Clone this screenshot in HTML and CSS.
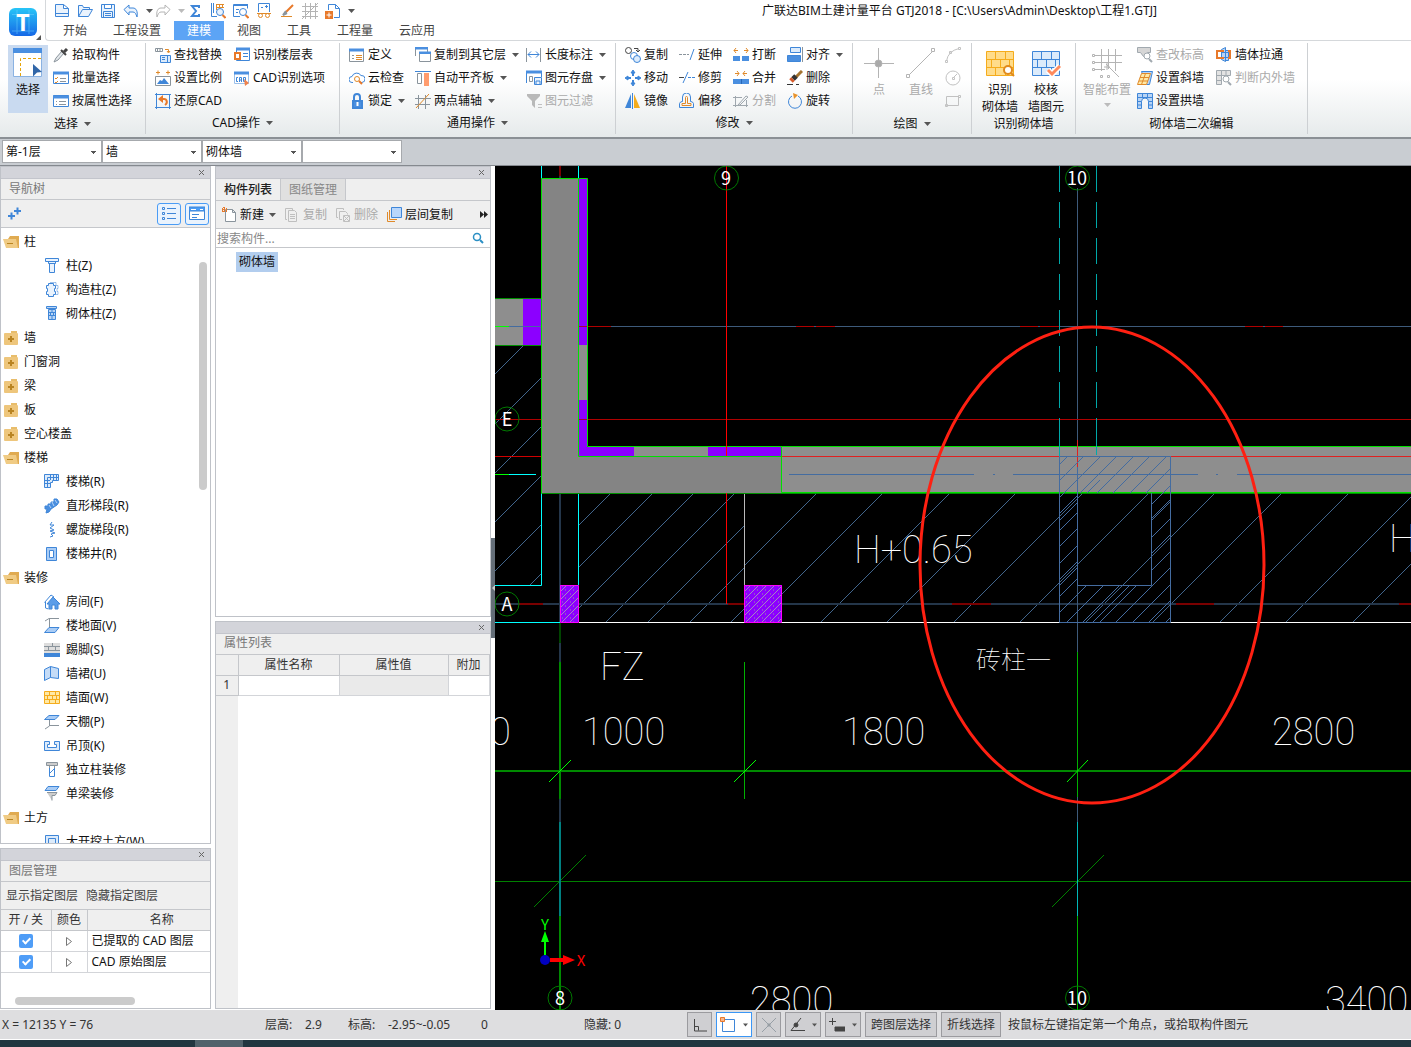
FILE: index.html
```html
<!DOCTYPE html>
<html lang="zh-CN">
<head>
<meta charset="utf-8">
<title>广联达BIM土建计量平台 GTJ2018</title>
<link rel="stylesheet" href="styles.css">
</head>
<body>
<svg class="defs" aria-hidden="true">
  <symbol id="caret" viewBox="0 0 7 4"><path d="M0 0h7L3.5 4z"/></symbol>
  <symbol id="close" viewBox="0 0 7 7"><path class="x" d="M1 1l5 5M6 1L1 6"/></symbol>
  <symbol id="open" viewBox="0 0 16 16"><path fill="#e0ab52" d="M7 2h9v12h-3V5H5z"/><path fill="#f0cb84" d="M0 5h13l2 9H3z"/><path fill="#b98422" d="M4 9h6v1H4z"/></symbol>
  <symbol id="shut" viewBox="0 0 16 16"><path fill="#e8bd6b" d="M8 1h6v2H8z"/><rect x="1" y="3" width="14" height="12" rx="1" fill="#eec67c"/><path fill="#b98422" d="M5 8h6v2H5zM7 6h2v6H7z"/></symbol>
</svg>

<header class="top">
  <div class="logo">
    <svg viewBox="0 0 45 41" class="logo-art"><defs><linearGradient id="lg" x1="0" y1="0" x2="0" y2="1"><stop offset="0" stop-color="#27c5f7"/><stop offset="1" stop-color="#1668e6"/></linearGradient></defs><rect x="9" y="8" width="28" height="28" rx="6" fill="url(#lg)"/><path d="M12 14.500h22M12 31h22M17 10v24M29 10v24" stroke="#6fd0ff" opacity=".5" stroke-width="1"/><text x="23" y="31" text-anchor="middle">T</text><path d="M41 35v5h-5z" fill="#555"/></svg>
  </div>
  <div class="top-main">
    <div class="titlebar">
      <div class="quick">
        <button aria-label="新建"><svg class="ico b" viewBox="0 0 16 16"><path fill="#eaf3fd" d="M1.500 1.500h8l5 4v8h-13zM9.500 1.500v4h5M1.500 10.500h13"/></svg></button>
        <button aria-label="打开"><svg class="ico b" viewBox="0 0 16 16"><path fill="#eaf3fd" d="M1.500 13.500v-11h4l1 2h6v2M1.500 13.500l4-7h10l-4 7z"/></svg></button>
        <button aria-label="保存"><svg class="ico b" viewBox="0 0 16 16"><path fill="#eaf3fd" d="M1.500 1.500h13v13h-13zM4.500 1.500v4h7v-4M3.500 14.500v-6h9v6M5 10.500h6M5 12.500h6"/></svg></button>
        <button aria-label="撤销"><svg class="ico b" viewBox="0 0 16 16"><path fill="#eaf3fd" d="M1 6.500L6 2v3h4c3 0 5 3 4 9-1-3-2-5-4-5H6v3z"/></svg></button>
        <button class="arrow" aria-label="撤销列表"><svg class="caret"><use href="#caret"/></svg></button>
        <button aria-label="恢复"><svg class="ico s" viewBox="0 0 16 16"><path d="M15 6.500L10 2v3H6c-3 0-5 3-4 9 1-3 2-5 4-5h4v3z"/></svg></button>
        <button class="arrow" aria-label="恢复列表"><svg class="caret pale"><use href="#caret"/></svg></button>
        <button aria-label="汇总计算"><svg class="ico b2" viewBox="0 0 16 16"><path d="M12 5V3H5l4 5-4 5h7v-2"/></svg></button>
        <button aria-label="查看工程量"><svg class="ico b" viewBox="0 0 16 16"><path d="M1.500 0v13.500H7M3.500 0v10"/><path class="o" d="M6 1.500h8M6 4.500h8M6.500 1v6M9.500 1v4M12.500 1v4"/><circle cx="10" cy="9" r="3.500" fill="#eaf3fd"/><path class="o2" d="M12.500 12l3 3"/></svg></button>
        <button aria-label="查看报表"><svg class="ico b" viewBox="0 0 16 16"><path d="M.5 1.500h14v4M.5 1.500v12H7M3 6.500h3M3 9.500h2"/><path class="b2" d="M1 2h14"/><circle cx="10" cy="9" r="3.500"/><path class="o2" d="M12.500 12l3 3"/></svg></button>
        <button aria-label="查看三维"><svg class="ico b" viewBox="0 0 16 16"><path d="M2.500 9V.5h11V9M5 4.500h2M9 3.500h3M10.500 2v3"/><path class="o" d="M1 10.500h14"/><circle class="o" cx="4.500" cy="12.500" r="2"/><circle class="o" cx="11.500" cy="12.500" r="2"/></svg></button>
        <button aria-label="画笔"><svg class="ico" viewBox="0 0 16 16"><path class="o2" d="M14 2L6 10"/><path class="g2" d="M7 8l-3 4 4-2"/><path class="o" d="M2 13.500h11"/></svg></button>
        <button aria-label="轴网"><svg class="ico s" viewBox="0 0 16 16"><path d="M3.500 0v16M8.500 0v16M13.500 0v16M0 3.500h16M0 8.500h16M0 13.500h16M0 16L16 0"/></svg></button>
        <button aria-label="导出"><svg class="ico b" viewBox="0 0 16 16"><path d="M3.500 7V1.500h7l4 4v9H9M10.500 1.500v4h4"/><rect x="0" y="8" width="8" height="8" fill="#e8792a" stroke="none"/><path stroke="#fff" d="M1.500 12h5M4 9.500v5"/></svg></button>
        <button class="arrow more" aria-label="自定义"><svg class="caret"><use href="#caret"/></svg></button>
      </div>
      <h1>广联达BIM土建计量平台 GTJ2018 - [C:\Users\Admin\Desktop\工程1.GTJ]</h1>
    </div>
    <nav class="tabs">
      <button>开始</button><button>工程设置</button><button class="on">建模</button><button>视图</button><button>工具</button><button>工程量</button><button>云应用</button>
    </nav>
  </div>
</header>

<section class="ribbon">
  <div class="group g-select">
    <div class="body">
      <button class="big on"><svg class="pic" viewBox="0 0 30 30"><path fill="#fff" stroke="#8ab2e2" d="M.5 1.500h28v27H.5z"/><path fill="#4a8fe0" d="M0 0h29v5H0z"/><path fill="none" stroke="#e5a50a" stroke-dasharray="3 2" d="M7.500 28V10.500H29"/><path fill="#3166a8" d="M20 16l9 8-5 .5-4 4z"/></svg>选择</button>
      <div class="tools">
        <button><svg class="ico" viewBox="0 0 16 16"><path class="g" fill="#e4e8eb" d="M9 4L3 11l-2 4 4-2 6-7z"/><path stroke="#444" stroke-width="2" d="M8 3l5 5"/><path stroke="#444" stroke-width="3" d="M11 5l3-3"/></svg>拾取构件</button>
        <button><svg class="ico b" viewBox="0 0 16 16"><path fill="#fff" d="M.5 2.500h15v11H.5z"/><path class="b3" d="M0 3h16"/><path class="o" d="M2 8l1 1 2-2M2 12l1 1 2-2"/><path class="g" d="M7 8.500h6M7 11.500h6"/></svg>批量选择</button>
        <button><svg class="ico b" viewBox="0 0 16 16"><path fill="#fff" d="M.5 2.500h15v11H.5z"/><path class="b3" d="M0 4h16"/><path class="g" d="M3 8.500h1M6 8.500h7M3 11.500h1M6 11.500h7"/></svg>按属性选择</button>
      </div>
    </div>
    <button class="name">选择<svg class="caret"><use href="#caret"/></svg></button>
  </div>

  <div class="group g-cad">
    <div class="body"><div class="tools">
      <button><svg class="ico" viewBox="0 0 16 16"><path class="g" d="M.5 1.500h7v3h-7zM2.500 1.500v3M5 1.500v3"/><path class="o" d="M10 2.500h3.500V5M12 4l1.500 2L15 4"/><path class="b" fill="#dcebfb" d="M5.500 8.500h10v7h-10zM7 10.500h3M7 12.500h3M12.500 8.500v7"/></svg>查找替换</button>
      <button><svg class="ico" viewBox="0 0 16 16"><path class="o" d="M1 2.500h4M3 .5v4M11 2.500h4M13 .5v4"/><path class="g" d="M.5 6.500h15v9H.5z"/><path fill="#3f86d8" d="M2 14l3-4 2 1 2-3 5 6z"/></svg>设置比例</button>
      <button><svg class="ico b" viewBox="0 0 16 16"><path d="M1.500 0v16M0 14.500h16M14.500 2v14M0 1.500h16"/><path class="o2" d="M10 12c3-2 2-6-1-6H6"/><path fill="#e8792a" stroke="none" d="M3 6l5-4v8z"/></svg>还原CAD</button>
      <button><svg class="ico b" viewBox="0 0 16 16"><path d="M2.500 1.500h13v12h-13zM9 6.500h5M9 9.500h5"/><path class="b3" d="M2 2h14"/><rect class="o2" x="1" y="6" width="5" height="6" fill="#fff"/></svg>识别楼层表</button>
      <button><svg class="ico b" viewBox="0 0 16 16"><path stroke="#9cc0ea" d="M.5 2.500h14v11H.5z"/><path class="b3" d="M0 3h15"/><path d="M4 7.500H2.500v4H4M5.500 12V7.500h2V12M5.500 10h2M9.500 7.500h2v4h-2z"/><path fill="#f0824a" stroke="none" d="M10 9l5 4-4 3z"/></svg>CAD识别选项</button>
    </div></div>
    <button class="name">CAD操作<svg class="caret"><use href="#caret"/></svg></button>
  </div>

  <div class="group g-common">
    <div class="body"><div class="tools">
      <button><svg class="ico b" viewBox="0 0 16 16"><path class="g" d="M.5 2.500h14v12H.5z"/><path class="b3" d="M0 3h15"/><path class="o" d="M7 8.500h6M7 10.500h6M7 12.500h6"/><path class="g" d="M3 8.500h2M3 11.500h2"/></svg>定义</button>
      <button><svg class="ico b" viewBox="0 0 16 16"><path d="M4 12.500H3a3 3 0 010-6 5 5 0 019-1 3.500 3.500 0 011 7h-1"/><circle class="o" cx="8" cy="9" r="2.500"/><path class="o2" d="M10 11l3 3"/></svg>云检查</button>
      <button><svg class="ico b2" viewBox="0 0 16 16"><path d="M5 7V4a3 3 0 016 0v3"/><rect x="4" y="8" width="9" height="7" fill="#4a8fe0"/><path stroke="#fff" d="M8.500 9v4"/></svg>锁定<svg class="caret"><use href="#caret"/></svg></button>
      <button><svg class="ico g" viewBox="0 0 16 16"><path d="M.5 9V.5h12V5"/><path class="b3" d="M0 1h13M4 6h12"/><path fill="#fff" d="M4.500 7v7.500h11V7"/></svg>复制到其它层<svg class="caret"><use href="#caret"/></svg></button>
      <button><svg class="ico g" viewBox="0 0 16 16"><path class="b" d="M0 1.500h16"/><path d="M2.500 3.500h4v10h-4z"/><path fill="#ff9c6e" stroke="none" d="M9 3h5v13H9z"/></svg>自动平齐板<svg class="caret"><use href="#caret"/></svg></button>
      <button><svg class="ico g" viewBox="0 0 16 16"><path d="M3.500 2v14M10.500 2v14M0 5.500h16M0 11.500h15"/><path class="o" d="M1 15L14 1"/></svg>两点辅轴<svg class="caret"><use href="#caret"/></svg></button>
      <button><svg class="ico g" viewBox="0 0 16 16"><path d="M.5 1v14M14.500 1v14"/><path class="b" d="M2 7.500h11M5 4.500l-3 3 3 3M10 4.500l3 3-3 3"/></svg>长度标注<svg class="caret"><use href="#caret"/></svg></button>
      <button><svg class="ico b" viewBox="0 0 16 16"><path d="M.5 13V1.500h15V7"/><path class="b3" d="M0 2h16"/><path class="g" d="M3.500 6.500h3v5h-3z"/><path fill="#eaf3fd" d="M8.500 7.500h7v7h-7zM10 14v-3h4v3"/></svg>图元存盘<svg class="caret"><use href="#caret"/></svg></button>
      <button disabled><svg class="ico" viewBox="0 0 16 16"><path fill="#aaa" d="M1 1h13v2L9 8v7l-3-3V8L1 3z"/><path class="s" d="M12 11.500h4M12 14.500h4"/></svg>图元过滤</button>
    </div></div>
    <button class="name">通用操作<svg class="caret"><use href="#caret"/></svg></button>
  </div>

  <div class="group g-modify">
    <div class="body"><div class="tools">
      <button><svg class="ico" viewBox="0 0 16 16"><circle stroke="#444" cx="3.500" cy="3.500" r="3"/><circle class="b" cx="9" cy="9" r="3.500"/><circle class="b" fill="#dcebfb" cx="12" cy="12" r="3.500"/><path stroke="#444" d="M9 1.500h4V5M11 3l2 2 2-2"/></svg>复制</button>
      <button><svg class="ico b" viewBox="0 0 16 16"><path fill="#3f86d8" d="M8 0l2 3H6zM8 16l2-3H6zM0 8l3-2v4zM16 8l-3-2v4z"/><path class="b2" d="M8 2v4M8 10v4M2 8h4M10 8h4"/></svg>移动</button>
      <button><svg class="ico" viewBox="0 0 16 16"><path fill="#3f86d8" d="M6 1v14H0z"/><path class="b" d="M7.500 0v16"/><path fill="#f5ac1c" d="M9 1l6 14H9z"/></svg>镜像</button>
      <button><svg class="ico b" viewBox="0 0 16 16"><path class="g" stroke-dasharray="3 1" d="M0 7.500h10"/><path d="M15 2l-4 11"/></svg>延伸</button>
      <button><svg class="ico b" viewBox="0 0 16 16"><path stroke="#444" d="M0 7.500h5"/><path d="M9 2L4 13"/><path stroke-dasharray="3 1" d="M9 7.500h7"/></svg>修剪</button>
      <button><svg class="ico b" viewBox="0 0 16 16"><path d="M.5 14.500v-4a3 3 0 013-2V4a4 4 0 018 0v4.500a3 3 0 013 2v4z"/><path class="o" d="M3 12.500v-2h3.500V4.500a1 1 0 012 0v6H12v2z"/></svg>偏移</button>
      <button><svg class="ico" viewBox="0 0 16 16"><path class="o" d="M1 3.500h4M3 1L1 3.500 3 6M11 3.500h4M13 1l2 2.500L13 6"/><path fill="#4a8fe0" d="M0 9h7v5H0zM9 9h7v5H9z"/></svg>打断</button>
      <button><svg class="ico" viewBox="0 0 16 16"><path class="o" d="M2 3.500h4M4 1l2 2.500L4 6M10 3.500h4M12 1l-2 2.500L12 6"/><path fill="#4a8fe0" d="M0 9h16v5H0z"/><path stroke="#2869b8" d="M8.500 9v5"/></svg>合并</button>
      <button disabled><svg class="ico g" viewBox="0 0 16 16"><path d="M0 4.500h9M2.500 3v11M0 12.500h15M13.500 7v7M5 12l8-9 2 1-8 8z"/></svg>分割</button>
      <button><svg class="ico b" viewBox="0 0 16 16"><path fill="#dcebfb" d="M3.500.5h10v5h-10z"/><path fill="#4a8fe0" d="M.5 8.500h13v6H.5z"/><path class="g" d="M15.500 0v15"/></svg>对齐<svg class="caret"><use href="#caret"/></svg></button>
      <button><svg class="ico" viewBox="0 0 16 16"><path stroke="#a4732f" stroke-width="3" d="M15 1L9 7"/><path stroke="#333" stroke-width="5" d="M9 6l-3 3"/><path stroke="#d65a2a" stroke-width="5" d="M6 9l-2 2"/><path stroke="#333" d="M0 14.500h6M9 14.500h3"/></svg>删除</button>
      <button><svg class="ico b" viewBox="0 0 16 16"><path d="M5 3a6.500 6.500 0 106 0"/><path fill="#e8922a" stroke="none" d="M6 0l5 2-4 4z"/></svg>旋转</button>
    </div></div>
    <button class="name">修改<svg class="caret"><use href="#caret"/></svg></button>
  </div>

  <div class="group g-draw">
    <div class="body">
      <button class="big" disabled><svg class="pic s" viewBox="0 0 30 30"><path d="M14.500 0v30M0 15.500h30"/><circle cx="14.500" cy="15.500" r="3.500" fill="#aaa"/></svg>点</button>
      <button class="big" disabled><svg class="pic s" viewBox="0 0 30 30"><path d="M3 27L27 3"/><path fill="#fff" d="M.5 26.500h3v3h-3zM25.500.5h3v3h-3z"/></svg>直线</button>
      <div class="tools">
        <button disabled aria-label="弧"><svg class="ico s" viewBox="0 0 16 16"><path d="M1.500 14Q3 4 14 1.500M.5 13.500h2v2h-2zM13.500.5h2v2h-2zM4.500 4.500h2v2h-2z"/></svg></button>
        <button disabled aria-label="圆"><svg class="ico s" viewBox="0 0 16 16"><circle cx="8" cy="8" r="7"/><path d="M7.500 7.500h2v2h-2zM9 7l3-3"/></svg></button>
        <button disabled aria-label="矩形"><svg class="ico s" viewBox="0 0 16 16"><path d="M1.500 3.500h12v9h-12zM.5 11.500h2v2h-2zM13.500 2.500h2v2h-2z"/></svg></button>
      </div>
    </div>
    <button class="name">绘图<svg class="caret"><use href="#caret"/></svg></button>
  </div>

  <div class="group g-detect">
    <div class="body">
      <button class="big"><svg class="pic" viewBox="0 0 30 30"><path fill="#ffdc8a" stroke="#f5ac1c" d="M1.500 3.500h27v24h-27zM1.500 11.500h27M1.500 19.500h27M10.500 3.500v8M20.500 3.500v8M6.500 11.500v8M15.500 11.500v8M24.500 11.500v8M10.500 19.500v8M20.500 19.500v8"/><circle cx="23" cy="22" r="4" fill="#fff" stroke="#e08a1c" stroke-width="2"/><path stroke="#e08a1c" stroke-width="2" d="M26 25l3 3"/></svg>识别<br>砌体墙</button>
      <button class="big"><svg class="pic" viewBox="0 0 30 30"><path fill="#dcebfb" stroke="#3f86d8" d="M1.500 3.500h27v24h-27zM1.500 11.500h27M1.500 19.500h27M10.500 3.500v8M20.500 3.500v8M6.500 11.500v8M15.500 11.500v8M24.500 11.500v8M10.500 19.500v8M20.500 19.500v8"/><path stroke="#fff" stroke-width="6" fill="none" d="M17 22l4 4 8-8"/><path stroke="#ff8a5c" stroke-width="3" fill="none" d="M17 22l4 4 8-8"/></svg>校核<br>墙图元</button>
    </div>
    <span class="name">识别砌体墙</span>
  </div>

  <div class="group g-edit">
    <div class="body">
      <button class="big" disabled><svg class="pic s" viewBox="0 0 30 30"><path d="M9.500 1v22M16.500 1v20M23.500 1v22M1 7.500h29M1 14.500h29M1 21.500h12M14 16l13 13M12 19h6M15 14v8"/><path fill="#fff" d="M.5 6.500h2v2h-2zM.5 13.500h2v2h-2zM.5 20.500h2v2h-2zM8.500 27.500h2v2h-2zM15.500 27.500h2v2h-2z"/></svg>智能布置<svg class="caret pale"><use href="#caret"/></svg></button>
      <div class="tools">
        <button disabled><svg class="ico g" viewBox="0 0 16 16"><path fill="#ccc" d="M.5.500h13v5h-3l-4 4-3-4h-3z"/><circle cx="10" cy="9" r="3" fill="#fff"/><path class="g2" d="M12 12l3 3"/></svg>查改标高</button>
        <button><svg class="ico" viewBox="0 0 16 16"><path class="b" fill="#b8d4f5" d="M4.500 1.500h11l-3 13h-3z"/><path class="o" fill="#ffe9a6" d="M4.500 3.500h9l-4 11h-9zM3 7.500h9M2 11h9M8.500 3.500l-4 11"/></svg>设置斜墙</button>
        <button><svg class="ico b" viewBox="0 0 16 16"><path fill="#b8d4f5" d="M.5.500h15v15h-4v-7a3 3 0 00-7 0v7h-4zM.5 4.500h15M.5 8.500h4M11.500 8.500h4M.5 12h4M11.500 12h4M5.500.500v4M10.500.500v4"/></svg>设置拱墙</button>
        <button><svg class="ico b" viewBox="0 0 16 16"><path fill="#b8d4f5" d="M5.500 2.500l4-2v14l-4-2zM9.500 3.500h3v10h-3M5.500 5.500h7M5.500 10.500h7"/><path class="o2" d="M8 4H1v7h7M12 4h2v7h-2"/></svg>墙体拉通</button>
        <button disabled><svg class="ico g" viewBox="0 0 16 16"><path fill="#ddd" d="M.5.500h5v14h-5zM5.500.500h9v5h-9zM.5 5.500h5M.5 10.500h5M10 1v4"/><circle cx="10" cy="9" r="3" fill="#fff"/><path class="g2" d="M12 12l3 3"/></svg>判断内外墙</button>
      </div>
    </div>
    <span class="name">砌体墙二次编辑</span>
  </div>
</section>

<section class="filters">
  <select aria-label="楼层"><option>第-1层</option></select>
  <select aria-label="类别"><option>墙</option></select>
  <select aria-label="构件类型"><option>砌体墙</option></select>
  <select aria-label="构件"><option></option></select>
</section>

<main>
  <div class="col left">
    <section class="panel nav">
      <div class="strip"><button aria-label="关闭"><svg><use href="#close"/></svg></button></div>
      <h2>导航树</h2>
      <div class="bar">
        <button class="plus" aria-label="展开"><svg class="ico b2" viewBox="0 0 16 16"><path d="M0 10h7M3.500 6.500v7M6 5h7M9.500 1.500v7"/></svg></button>
        <button class="view" aria-label="列表"><svg class="ico b" viewBox="0 0 16 16"><path d="M1.500 1.500h2v2h-2zM1.500 6.500h2v2h-2zM1.500 11.500h2v2h-2zM6 2.500h9M6 7.500h9M6 12.500h9"/></svg></button>
        <button class="view" aria-label="窗口"><svg class="ico b" viewBox="0 0 16 16"><path fill="#fff" d="M.5 1.500h15v12H.5z"/><path fill="#4a9cf5" d="M0 1h16v4H0z"/><path d="M3 8.500h7M3 11.500h5"/><path stroke="#fff" d="M2 3.500h5M11 3.500h3"/></svg></button>
      </div>
      <div class="tree">
        <ul>
          <li class="f"><svg class="ico"><use href="#open"/></svg>柱</li>
          <li><svg class="ico b" viewBox="0 0 16 16"><path fill="#eaf3fd" d="M1.500.500h13v3h-13zM4.500 3.500h7v2h-7zM5.500 5.500h5v9h-5z"/></svg>柱(Z)</li>
          <li><svg class="ico b" viewBox="0 0 16 16"><path fill="#eaf3fd" d="M4.500 1.500h5v2h2v3h-1v3h1v3h-2v2h-5v-2h-2v-3h1v-3h-1v-3h2z"/><path opacity=".5" d="M6 .5h6v3h2v3h-1v3h1v3h-2"/></svg>构造柱(Z)</li>
          <li><svg class="ico b" viewBox="0 0 16 16"><path fill="#b8d4f5" d="M2.500.500h10v2h-10zM4.500 3.500h7v10h-7zM4.500 6.500h7M4.500 9.500h7M8 3v3M6.500 6v3M9.500 6v3M8 10v3"/></svg>砌体柱(Z)</li>
          <li class="f"><svg class="ico"><use href="#shut"/></svg>墙</li>
          <li class="f"><svg class="ico"><use href="#shut"/></svg>门窗洞</li>
          <li class="f"><svg class="ico"><use href="#shut"/></svg>梁</li>
          <li class="f"><svg class="ico"><use href="#shut"/></svg>板</li>
          <li class="f"><svg class="ico"><use href="#shut"/></svg>空心楼盖</li>
          <li class="f"><svg class="ico"><use href="#open"/></svg>楼梯</li>
          <li><svg class="ico b" viewBox="0 0 16 16"><path fill="#dcebfb" d="M.5.500h14v6h-6v2h-2v5h-6zM3.500 3.500h11M3.500 3.500v10M1 6.500h5M1 9.500h5M6.500 1v5M9.500 1v5M12.500 1v5"/></svg>楼梯(R)</li>
          <li><svg class="ico b" viewBox="0 0 16 16"><path fill="#4a8fe0" d="M1 8h3V6h3V4h3V1h3l2 3-2 3-3 2-3 2-2 3-3 1 1-4H1z"/><path stroke="#b8d4f5" d="M5 7l2 3M8 4l2 4M11 2l2 3"/></svg>直形梯段(R)</li>
          <li><svg class="ico b" viewBox="0 0 16 16"><path d="M8 0l-2 3h4L6 6l4 2-4 1 5 2-4 1 2 2-3 1"/></svg>螺旋梯段(R)</li>
          <li><svg class="ico b" viewBox="0 0 16 16"><path fill="#a9ccf5" d="M2.500 1.500h10v13h-10z"/><path fill="#fff" d="M5.500 4.500h4v7h-4z"/></svg>楼梯井(R)</li>
          <li class="f"><svg class="ico"><use href="#open"/></svg>装修</li>
          <li><svg class="ico b" viewBox="0 0 16 16"><path fill="#5b9de8" d="M9 3l7 7h-2v5h-3v-4H8v4H5v-5H3z"/><path d="M.5 8.500L7 1l3 2M1.500 8v6l3 1"/></svg>房间(F)</li>
          <li><svg class="ico b" viewBox="0 0 16 16"><path class="g" d="M1 3l4-2.500h10M5.500 1v9"/><path fill="#a9ccf5" d="M5 9.500h10l-4 5H.5z"/></svg>楼地面(V)</li>
          <li><svg class="ico g" viewBox="0 0 16 16"><path fill="#ddd" stroke="none" d="M0 1h16v10H0z"/><path d="M0 4.500h16M0 8.500h16M8.500 1v3M4.500 4v4M11.500 4v4"/><path fill="#3f86d8" stroke="none" d="M0 11h16v4H0z"/></svg>踢脚(S)</li>
          <li><svg class="ico b" viewBox="0 0 16 16"><path fill="#c5dcf7" d="M.5 3.500L6.500.500v11l-6 3zM6.500.500l8 2v10l-8-1"/></svg>墙裙(U)</li>
          <li><svg class="ico" viewBox="0 0 16 16"><path fill="#ffe9a6" stroke="#f5ac1c" d="M.5 1.500h15v12H.5zM.5 5.500h15M.5 9.500h15M5.500 1.500v4M11.500 1.500v4M3.500 5.500v4M8.500 5.500v4M12.500 5.500v4M5.500 9.500v4M11.500 9.500v4"/></svg>墙面(W)</li>
          <li><svg class="ico b" viewBox="0 0 16 16"><path fill="#a9ccf5" d="M5 1.500h10l-4 4H.5z"/><path class="g" d="M5.500 6v6L1 15M5 11.500h10"/></svg>天棚(P)</li>
          <li><svg class="ico b" viewBox="0 0 16 16"><path fill="#dcebfb" d="M.5 3.500h5v3h-2v3h9v-3h-2v-3h5v9H.5z"/></svg>吊顶(K)</li>
          <li><svg class="ico g" viewBox="0 0 16 16"><path fill="#ccc" d="M2.500.500h11v3h-11z"/><path class="b" d="M5.500 6v8.500h5V6M6 11l4-4"/><path d="M5.500 4v2M10.500 4v2"/></svg>独立柱装修</li>
          <li><svg class="ico g" viewBox="0 0 16 16"><path class="b" fill="#a9ccf5" d="M4 .5h11l-3 4H1z"/><path fill="#ccc" d="M3 6.500h10l-2 3H8v5"/></svg>单梁装修</li>
          <li class="f"><svg class="ico"><use href="#open"/></svg>土方</li>
          <li><svg class="ico b" viewBox="0 0 16 16"><path fill="#dcebfb" d="M1.500 1.500h13v13h-13zM4.500 4.500h7v7h-7z"/></svg>大开挖土方(W)</li>
        </ul>
        <span class="thumb"></span>
      </div>
    </section>

    <section class="panel layers">
      <div class="strip"><button aria-label="关闭"><svg><use href="#close"/></svg></button></div>
      <h2>图层管理</h2>
      <div class="bar"><button>显示指定图层</button><button>隐藏指定图层</button></div>
      <table>
        <colgroup><col class="w-on"><col class="w-color"><col></colgroup>
        <thead><tr><th>开 / 关</th><th>颜色</th><th class="wide">名称</th></tr></thead>
        <tbody>
          <tr><td class="c"><input type="checkbox" checked aria-label="已提取的 CAD 图层"></td><td class="c"><svg class="tri" viewBox="0 0 6 9"><path d="M.5.500l5 4-5 4z"/></svg></td><td>已提取的 CAD 图层</td></tr>
          <tr><td class="c"><input type="checkbox" checked aria-label="CAD 原始图层"></td><td class="c"><svg class="tri" viewBox="0 0 6 9"><path d="M.5.500l5 4-5 4z"/></svg></td><td>CAD 原始图层</td></tr>
        </tbody>
      </table>
      <span class="hthumb"></span>
    </section>
  </div>

  <div class="col mid">
    <section class="panel parts">
      <div class="strip"><button aria-label="关闭"><svg><use href="#close"/></svg></button></div>
      <div class="ptabs"><button class="on">构件列表</button><button>图纸管理</button></div>
      <div class="bar">
        <button><svg class="ico g" viewBox="0 0 16 16"><path fill="#fff" d="M4.500 2.500h7l3 3v9h-10zM11.500 2.500v3h3"/><path class="o2" stroke-dasharray="1 1" d="M1 2h5M1 4h5M3 0v6"/></svg>新建<svg class="caret"><use href="#caret"/></svg></button>
        <button disabled><svg class="ico s" viewBox="0 0 16 16"><path d="M3 12.500H1.500v-11h7V3"/><path d="M4.500 3.500h6l2 2v9h-8zM6 7.500h5M6 9.500h5M6 11.500h5"/></svg>复制</button>
        <button disabled><svg class="ico s" viewBox="0 0 16 16"><path d="M3 10.500H1.500v-9h7V3"/><path d="M7 12.500H4.500v-8h6l2 2v1M8.500 8.500h6v6h-6zM9 9l5 5M14 9l-5 5"/></svg>删除</button>
        <button class="floors"><svg class="ico" viewBox="0 0 16 16"><path class="o" d="M1.500 5v9.500H9M3.500 3v9.500H11"/><path class="b" fill="#b8d6fb" d="M5.500.500h10v10h-10z"/></svg>层间复制</button>
        <button class="overflow" aria-label="更多"><svg viewBox="0 0 8 7"><path d="M0 0l4 3.500L0 7zM4 0l4 3.500L4 7z"/></svg></button>
      </div>
      <label class="search"><input type="text" placeholder="搜索构件..." aria-label="搜索构件"><svg class="ico" viewBox="0 0 16 16"><circle cx="7" cy="7" r="3.500" stroke="#2b8fc4" stroke-width="1.500"/><path stroke="#2b8fc4" stroke-width="2" d="M10 10l3 3"/></svg></label>
      <div class="items"><span>砌体墙</span></div>
    </section>

    <section class="panel props">
      <div class="strip"><button aria-label="关闭"><svg><use href="#close"/></svg></button></div>
      <h2>属性列表</h2>
      <table>
        <colgroup><col class="w-no"><col class="w-name"><col class="w-val"><col class="w-add"></colgroup>
        <thead><tr><th></th><th>属性名称</th><th>属性值</th><th>附加</th></tr></thead>
        <tbody><tr><th>1</th><td></td><td class="dim"></td><td></td></tr></tbody>
      </table>
      <div class="rest"></div>
    </section>
  </div>

  <div class="split"><button aria-label="收起"><svg viewBox="0 0 4 6"><path d="M4 0v6L1 3z"/></svg></button></div>

  <div class="canvas">
    <svg viewBox="495 166 916 844" preserveAspectRatio="xMinYMin slice">
      <defs>
        <clipPath id="c1"><path d="M495 346h46v239h-46z"/></clipPath>
        <clipPath id="c2"><path d="M579 494h165v128H579z"/></clipPath>
        <clipPath id="c3"><path d="M744 494h667v128H744z"/></clipPath>
        <clipPath id="c4"><path clip-rule="evenodd" d="M1060 457h110v165h-110zM1078 493v92h73v-92z"/></clipPath>
        <pattern id="p" width="8" height="8" patternUnits="userSpaceOnUse"><path d="M0 8L8 0" stroke="#a58abf"/><path d="M2 2h1M5 6h1" stroke="#999"/></pattern>
      </defs>
      <g class="hatch">
        <path clip-path="url(#c1)" d="M495 374l46-46M495 424l46-46M495 473l46-46M495 522l46-46M495 571l46-46M495 620l46-46"/>
        <path clip-path="url(#c2)" d="M482 622l129-129M524 622l129-129M565 622l129-129M606 622l129-129M648 622l129-129M690 622l129-129M731 622l129-129"/>
        <path clip-path="url(#c3)" d="M688 622l129-129M754 622l129-129M821 622l129-129M887 622l129-129M954 622l129-129M1020 622l129-129M1086 622l129-129M1153 622l129-129M1220 622l129-129M1286 622l129-129M1353 622l129-129"/>
      </g>
      <path class="w2 navy" d="M560 166v496M560 799v24M495 604h916"/>
      <path class="w2" stroke="#7a0000" d="M560 166v10M519 604h24M728 604h39M952 604h39M1176 604h38M1399 604h12"/>
      <path stroke="#3d5a7a" d="M587 326.500h824M1077.500 188v634"/>
      <path stroke="#b00000" d="M495 419.500h46M587 419.500h824M587 326.500h24M796 326.500h18M816 326.500h19M1020 326.500h18M1040 326.500h19M1245 326.500h18M1265 326.500h18"/>
      <path stroke="#d00000" d="M495 456.500h46"/>
      <path stroke="#0ff" d="M541.500 166v13M578.500 166v13M541.500 493v92.500H495M578.500 493v92M495 622.500h65M509 474.500h27"/>
      <path stroke="#0f0" d="M495 474.500h14"/>
      <path stroke="#fff" d="M579 622.500h832"/><path stroke="#bbb" d="M744.500 493v92"/>
      <path stroke="#00a8a8" stroke-dasharray="26 10" d="M1059.500 166v290M1096.500 166v290"/>

      <path fill="#8e8e8e" d="M495 299h28v46h-28zM579 345h8v55h-8zM634 447h74v9h-74zM781 447h630v46H781z"/>
      <path fill="#8c00ff" d="M523 299h18v46h-18zM579 179h8v166h-8zM579 400h8v47h47v9h-55zM708 447h73v9h-73z"/>
      <path fill="#848484" d="M541 178h38v278h202v37H541z"/>
      <path stroke="#009000" d="M495 298.500h46M495 345.500h46M541.500 493.500H1411"/>
      <path stroke="#00e000" d="M541.500 493.500v-315h46v268H1411M578.500 178.500v278h203M781.500 446v46.500H1411"/>
      <path stroke="#0f0" d="M495 326.500h14"/>
      <path stroke="#446ca0" d="M509 326.500h32M789 474.500h185M993 474.500h2M1013 474.500h185M1216 474.500h2M1237 474.500h174"/>
      <path stroke="#a00040" d="M579 326.500h8M579 419.500h8"/>
      <path stroke="#e02020" d="M782 456.500h277M1171 456.500h240M1077.500 440v27"/>
      <path stroke="#f00" d="M726.500 166v290M726.500 493v111"/>
      <path stroke="#0aa" d="M1059.500 442v14M1096.500 440v15"/>

      <g stroke="#446ca0">
        <path clip-path="url(#c4)" d="M1054 470l30-30M1030 510l70-70M1040 517l77-77M1040 533l93-93M1040 550l110-110M1040 566l126-126M1040 583l143-143M1040 599l159-159M1040 616l176-176M1040 632l176-176M1040 649l176-176M1040 665l176-176M1040 682l176-176M1040 698l176-176M1040 715l176-176M1040 731l176-176M1040 748l176-176M1040 757l176-176M1040 540l60-60M1040 605l50-50M1060 655l80-80M1100 570l80-80"/>
        <path d="M1059.500 456.500h111v166h-111zM1077.500 467v118.500h74V493"/>
      </g>
      <path fill="#8c00ff" d="M560 585h18v37h-18zM744 585h38v37h-38z"/>
      <path fill="url(#p)" stroke="#f0f" d="M560.500 585.500h18v37h-18zM744.500 585.500h37v37h-37z"/>

      <path class="w2" stroke="#008a00" d="M560 662v137M495 771h916M560 916v94"/>
      <path class="w2" stroke="#004400" d="M560 623v20"/>
      <path stroke="#00b000" d="M744.500 662v137M1077.500 652v145M1077.500 916v94"/>
      <path stroke="#008000" d="M495 881.500h916M534 907l52-52M1052 907l52-52"/>
      <path stroke="#0f0" d="M549 782l22-22M734 782l22-22M1067 782l21-22"/>
      <path class="w2" stroke="#008080" d="M560 822v94"/><path stroke="#00b8b8" d="M1077.500 822v94"/>

      <g stroke="#007800"><circle cx="726.500" cy="178" r="12"/><circle cx="1077.500" cy="178" r="12"/><circle cx="507" cy="419" r="12"/><circle cx="507" cy="604" r="12"/><circle cx="560" cy="998" r="12"/><circle cx="1077.500" cy="998" r="12"/></g>
      <g class="axis"><text x="726" y="185">9</text><text x="1077" y="185">10</text><text x="507" y="426">E</text><text x="507" y="611">A</text><text x="560" y="1005">8</text><text x="1077" y="1005">10</text></g>

      <g class="cad"><text x="854" y="563">H+0.65</text><text x="1389" y="552">H+0.65</text><text x="600" y="680">FZ</text><text x="490" y="745">0</text><text x="582" y="745">1000</text><text x="842" y="745">1800</text><text x="1272" y="745">2800</text><text x="750" y="1014">2800</text><text x="1325" y="1014">3400</text></g>
      <text class="cjk" x="976" y="669">砖柱一</text>

      <path class="w2" stroke="#0f0" d="M545 955v-14"/><path fill="#0f0" d="M545 931l4 11h-8z"/>
      <path stroke="#f00" stroke-width="4" d="M550 960h15"/><path fill="#f00" d="M563 955l12 5-12 5z"/>
      <circle cx="545" cy="960" r="5" fill="#0000c0"/>
      <text class="ax y" x="545" y="930">Y</text><text class="ax x" x="581" y="966">X</text>
      <ellipse cx="1092" cy="565" rx="172" ry="238" stroke="#ff2012" stroke-width="3"/>
    </svg>
  </div>
</main>

<footer>
  <div class="readout">
    <span class="r1">X = 12135 Y = 76</span><span class="r2">层高:</span><span class="r3">2.9</span><span class="r4">标高:</span><span class="r5">-2.95~-0.05</span><span class="r6">0</span><span class="r7">隐藏: 0</span>
  </div>
  <div class="snap">
    <button class="sq" aria-label="正交"><svg class="ico d" viewBox="0 0 16 16"><path d="M2.500 2v12H15M2.500 9.500h4v4"/></svg></button>
    <button class="dd on" aria-label="框选"><svg class="ico b" viewBox="0 0 16 16"><path d="M2.500 2.500h12v12h-12z"/><path stroke="#e8792a" fill="#f7b58a" d="M.5.500h4v4h-4z"/></svg><svg class="caret"><use href="#caret"/></svg></button>
    <button class="sq" disabled aria-label="交点"><svg class="ico g" viewBox="0 0 16 16"><path d="M1 1l14 14M15 1L1 15"/><path fill="#888" d="M7 7h2v2H7z"/></svg></button>
    <button class="dd" aria-label="角度"><svg class="ico d" viewBox="0 0 16 16"><path d="M12 1L2 13.500h14"/><circle cx="7" cy="8" r="2" fill="#444"/></svg><svg class="caret"><use href="#caret"/></svg></button>
    <button class="dd" aria-label="偏移"><svg class="ico d" viewBox="0 0 16 16"><path d="M0 4.500h7M3.500 1v7"/><path fill="#444" d="M6 10h10v4H6z"/></svg><svg class="caret"><use href="#caret"/></svg></button>
    <button>跨图层选择</button>
    <button>折线选择</button>
    <span>按鼠标左键指定第一个角点，或拾取构件图元</span>
  </div>
</footer>
<div class="taskbar"><span></span></div>
</body>
</html>
```
FILE: styles.css
```css
* { box-sizing: border-box; }
body {
  margin: 0;
  height: 100vh;
  display: flex;
  flex-direction: column;
  overflow: hidden;
  background: #fff;
  color: #111;
  font: 12px/16px "Noto Sans", "Noto Sans CJK SC", sans-serif;
}
button, select, input { font: inherit; color: inherit; margin: 0; }
button { border: 0; padding: 0; background: none; display: flex; align-items: center; white-space: nowrap; }
button:disabled { color: #aaa; }
h1, h2, ul { margin: 0; padding: 0; font-size: 12px; font-weight: 400; list-style: none; }
table { border-collapse: collapse; table-layout: fixed; width: 100%; }
th { font-weight: 400; }
.defs { position: absolute; width: 0; height: 0; }

/* icon strokes */
.ico { width: 16px; height: 16px; flex: none; fill: none; }
.pic { width: 30px; height: 30px; flex: none; }
.b { stroke: #3f86d8; }
.b2 { stroke: #3f86d8; stroke-width: 2; }
.b3 { stroke: #4a8fe0; stroke-width: 3; }
.o { stroke: #e08a2a; }
.o2 { stroke: #e8792a; stroke-width: 2; }
.g { stroke: #8a949c; }
.g2 { stroke: #8a949c; stroke-width: 2; }
.s { stroke: #b4b4b4; fill: none; }
.d { stroke: #444; }
:disabled .ico { opacity: .8; }
.caret { width: 7px; height: 4px; flex: none; fill: #555; stroke: none; }
.caret.pale { fill: #bbb; }

/* header */
.top { display: flex; height: 41px; flex: none; }
.logo { width: 45px; flex: none; }
.logo-art { width: 45px; height: 41px; display: block; }
.logo text { font: 700 23px "Noto Sans", sans-serif; fill: #fff; }
.top-main { flex: 1; display: flex; flex-direction: column; border-left: 1px solid #d5d8db; border-bottom: 1px solid #d5d8db; border-bottom-left-radius: 4px; }
.titlebar { display: flex; height: 22px; align-items: center; }
.quick { display: flex; width: 314px; padding-left: 8px; flex: none; }
.quick button { width: 23px; height: 20px; }
.quick .arrow { width: 9px; }
h1 { flex: 1; padding-left: 148px; text-align: center; white-space: nowrap; }
.tabs { display: flex; padding-left: 4px; height: 19px; }
.tabs button { padding: 0 13px; color: #444; }
.tabs .on { background: #5ca4f5; color: #fff; }

/* ribbon */
.ribbon { display: flex; flex: none; height: 98px; padding-top: 2px; background: linear-gradient(#fff 40%, #e6eaeb); border-bottom: 2px solid #8b9095; }
.group { display: flex; flex-direction: column; flex: none; border-right: 1px solid #cdd0d3; margin-bottom: 3px; }
.body { display: flex; height: 71px; }
.tools { display: grid; grid-template-rows: repeat(3, 23px); grid-auto-flow: column; justify-items: start; }
.tools button { gap: 3px; }
.tools .caret { margin-left: 3px; }
.big { flex-direction: column; height: 68px; padding-top: 3px; line-height: 17px; margin-top: 2px; }
.big.on { background: #c9daf0; width: 40px; }
.big .pic { margin-bottom: 3px; }
.big .caret { margin-top: 5px; }
.name { align-self: center; display: flex; gap: 6px; height: 22px; align-items: center; }
.g-select { width: 146px; }
.g-select .body { padding-left: 8px; }
.g-select .tools { padding-left: 5px; }
.g-cad { width: 194px; }
.g-cad .body { padding-left: 9px; }
.g-cad .tools { grid-template-columns: 79px 100px; }
.g-common { width: 276px; }
.g-common .body { padding-left: 9px; }
.g-common .tools { grid-template-columns: 66px 111px 84px; }
.g-modify { width: 237px; }
.g-modify .body { padding-left: 9px; }
.g-modify .tools { grid-template-columns: repeat(4, 54px); }
.g-draw { width: 119px; }
.g-draw .body { padding-left: 11px; }
.g-draw .big { width: 30px; margin-right: 12px; }
.g-draw .tools { margin-left: -3px; }
.g-detect { width: 104px; }
.g-detect .body { padding-left: 5px; }
.g-detect .big { width: 46px; }
.g-edit { width: 232px; }
.g-edit .body { padding-left: 7px; }
.g-edit .tools { padding-left: 6px; grid-template-columns: 79px 80px; }

/* drop-downs */
.filters { display: flex; flex: none; height: 27px; padding: 1px 2px; background: #c9cdd2; border-bottom: 1px solid #85898f; }
.filters select {
  appearance: none;
  width: 100px;
  height: 23px;
  padding: 0 3px;
  border: 1px solid #a6a9ad;
  border-radius: 0;
  background: linear-gradient(#555, #555) 88px 10px / 5px 1px no-repeat, linear-gradient(#555, #555) 89px 11px / 3px 1px no-repeat, linear-gradient(#555, #555) 90px 12px / 1px 1px no-repeat, #fff;
}

/* docked panels */
main { display: flex; flex: 1; min-height: 0; }
.col { display: flex; flex-direction: column; gap: 4px; padding-bottom: 1px; flex: none; }
.left { width: 211px; }
.mid { width: 276px; margin-left: 4px; }
.panel { border: 1px solid #bfc2c8; background: #fff; position: relative; display: flex; flex-direction: column; }
.strip { height: 12px; flex: none; background: #d3d4da; border-bottom: 1px solid #c3c5cc; display: flex; justify-content: flex-end; align-items: center; padding-right: 5px; }
.strip svg { width: 7px; height: 7px; display: block; fill: none; stroke: #666; stroke-width: 1px; }
.panel h2 { height: 21px; flex: none; padding: 2px 8px; background: #efefef; color: #777; border-bottom: 1px solid #c5c7cb; }
.bar { display: flex; align-items: center; height: 28px; flex: none; background: #efefef; border-bottom: 1px solid #c5c7cb; }
.nav { flex: 1; min-height: 0; }
.plus { margin: 0 auto 0 7px; }
.view { width: 24px; height: 22px; margin-right: 4px; border: 1px solid #4a9cf5; border-radius: 3px; justify-content: center; background: #eaf3fd; }
.view:last-child { margin-right: 1px; }
.tree { flex: 1; overflow: hidden; position: relative; padding-top: 2px; }
.tree li { display: flex; align-items: center; height: 24px; gap: 6px; padding-left: 43px; }
.tree .f { padding-left: 2px; gap: 5px; }
.thumb { position: absolute; right: 3px; top: 34px; width: 8px; height: 228px; border-radius: 4px; background: #cbcbcb; }
.layers { height: 161px; }
.layers .bar { gap: 8px; padding-left: 5px; color: #444; }
.layers th { height: 20px; padding: 0; background: #efefef; color: #333; border: 1px solid #c5c7cb; border-top: 0; }
.layers th.wide { padding-left: 26px; }
.layers td { height: 21px; padding: 0 4px; border: 1px solid #d3d5d9; white-space: nowrap; }
.layers tr > :first-child { border-left: 0; }
.layers tr > :last-child { border-right: 0; }
.layers .c { text-align: center; }
.w-on { width: 50px; }
.w-color { width: 36px; }
.tri { width: 6px; height: 9px; fill: #fff; stroke: #777; vertical-align: middle; }
input[type="checkbox"] { appearance: none; display: block; width: 14px; height: 14px; margin: 0 auto; border-radius: 2px; background: #4f9df7; position: relative; }
input[type="checkbox"]::after { content: ""; box-sizing: border-box; position: absolute; left: 5px; top: 2px; width: 5px; height: 8px; border: solid #fff; border-width: 0 2px 2px 0; transform: rotate(45deg); }
.hthumb { position: absolute; left: 14px; bottom: 3px; width: 120px; height: 8px; border-radius: 4px; background: #cbcbcb; }

.parts { height: 451px; }
.ptabs { display: flex; height: 22px; flex: none; background: #efefef; border-bottom: 1px solid #c5c7cb; }
.ptabs button { width: 65px; justify-content: center; color: #888; background: #e0e0e0; border-right: 1px solid #c5c7cb; }
.ptabs .on { color: #222; background: #efefef; font-weight: 500; }
.parts .bar { padding: 0 2px 0 5px; }
.parts .bar button { gap: 3px; margin-right: 8px; }
.parts .bar .caret { margin-left: 2px; }
.parts .bar .overflow { margin: 0 0 0 auto; }
.overflow svg { width: 8px; height: 7px; fill: #222; }
.search { display: flex; align-items: center; height: 19px; flex: none; padding-right: 4px; border-bottom: 1px solid #c5c7cb; }
.search input { flex: 1; min-width: 0; border: 0; padding: 0 1px; height: 18px; outline: 0; }
.search input::placeholder { color: #888; opacity: 1; }
.items { padding: 4px 20px; }
.items span { display: inline-block; height: 20px; padding: 2px 3px; background: #b2cdee; }
.props { flex: 1; }
.props h2 { padding-top: 1px; }
.props table { width: 273px; }
.props th { height: 20px; padding: 0; background: #efefef; color: #333; border: 1px solid #c5c7cb; border-width: 0 1px 1px 0; }
.props td { border: 1px solid #d3d5d9; border-width: 0 1px 1px 0; }
.props .dim { background: #eaeaea; }
.w-no { width: 22px; }
.w-name { width: 101px; }
.w-val { width: 109px; }
.w-add { width: 41px; }
.rest { flex: 1; width: 22px; background: #efefef; }
.split { width: 4px; flex: none; display: flex; align-items: center; }
.split button { width: 4px; height: 100px; background: #646e78; }
.split svg { width: 4px; height: 6px; fill: #ccc; }

/* drawing area */
.canvas { flex: 1; min-width: 0; background: #000; overflow: hidden; }
.canvas svg { width: 100%; height: 100%; display: block; fill: none; }
.hatch { stroke: #41658c; }
.w2 { stroke-width: 2; }
.navy { stroke: #24364a; }
.cad text { font: 100 38px Roboto, sans-serif; fill: #fff; }
.cjk { font: 100 25px "Noto Sans CJK SC", sans-serif; fill: #fff; }
.axis text { font: 18px "Noto Sans CJK SC", sans-serif; fill: #fff; text-anchor: middle; }
.ax { font: 15px "Noto Sans CJK SC", sans-serif; text-anchor: middle; }
.ax.y { fill: #0f0; }
.ax.x { fill: #f00; }

/* status bar */
footer { display: flex; align-items: center; height: 30px; flex: none; background: #dedee0; color: #333; border-bottom: 1px solid #fff; white-space: nowrap; }
.readout { display: flex; width: 687px; padding-left: 2px; flex: none; }
.r1 { width: 263px; }
.r2 { width: 40px; }
.r3 { width: 43px; }
.r4 { width: 40px; }
.r5 { width: 93px; }
.r6 { width: 103px; }
.snap { display: flex; align-items: center; gap: 4px; }
.snap button { height: 25px; padding: 0 5px; border: 1px solid #9b9b9f; background: #cfcfd2; }
.snap .sq { width: 25px; padding: 0 4px; }
.snap .dd { width: 36px; padding: 0 3px; justify-content: space-between; }
.snap .dd .caret { width: 5px; }
.snap .on { background: #fff; border-color: #3a96f5; }
.snap span { padding-left: 3px; }
.taskbar { height: 7px; flex: none; background: #213640; padding-left: 195px; }
.taskbar span { display: block; width: 48px; height: 7px; background: #50626b; }
```
